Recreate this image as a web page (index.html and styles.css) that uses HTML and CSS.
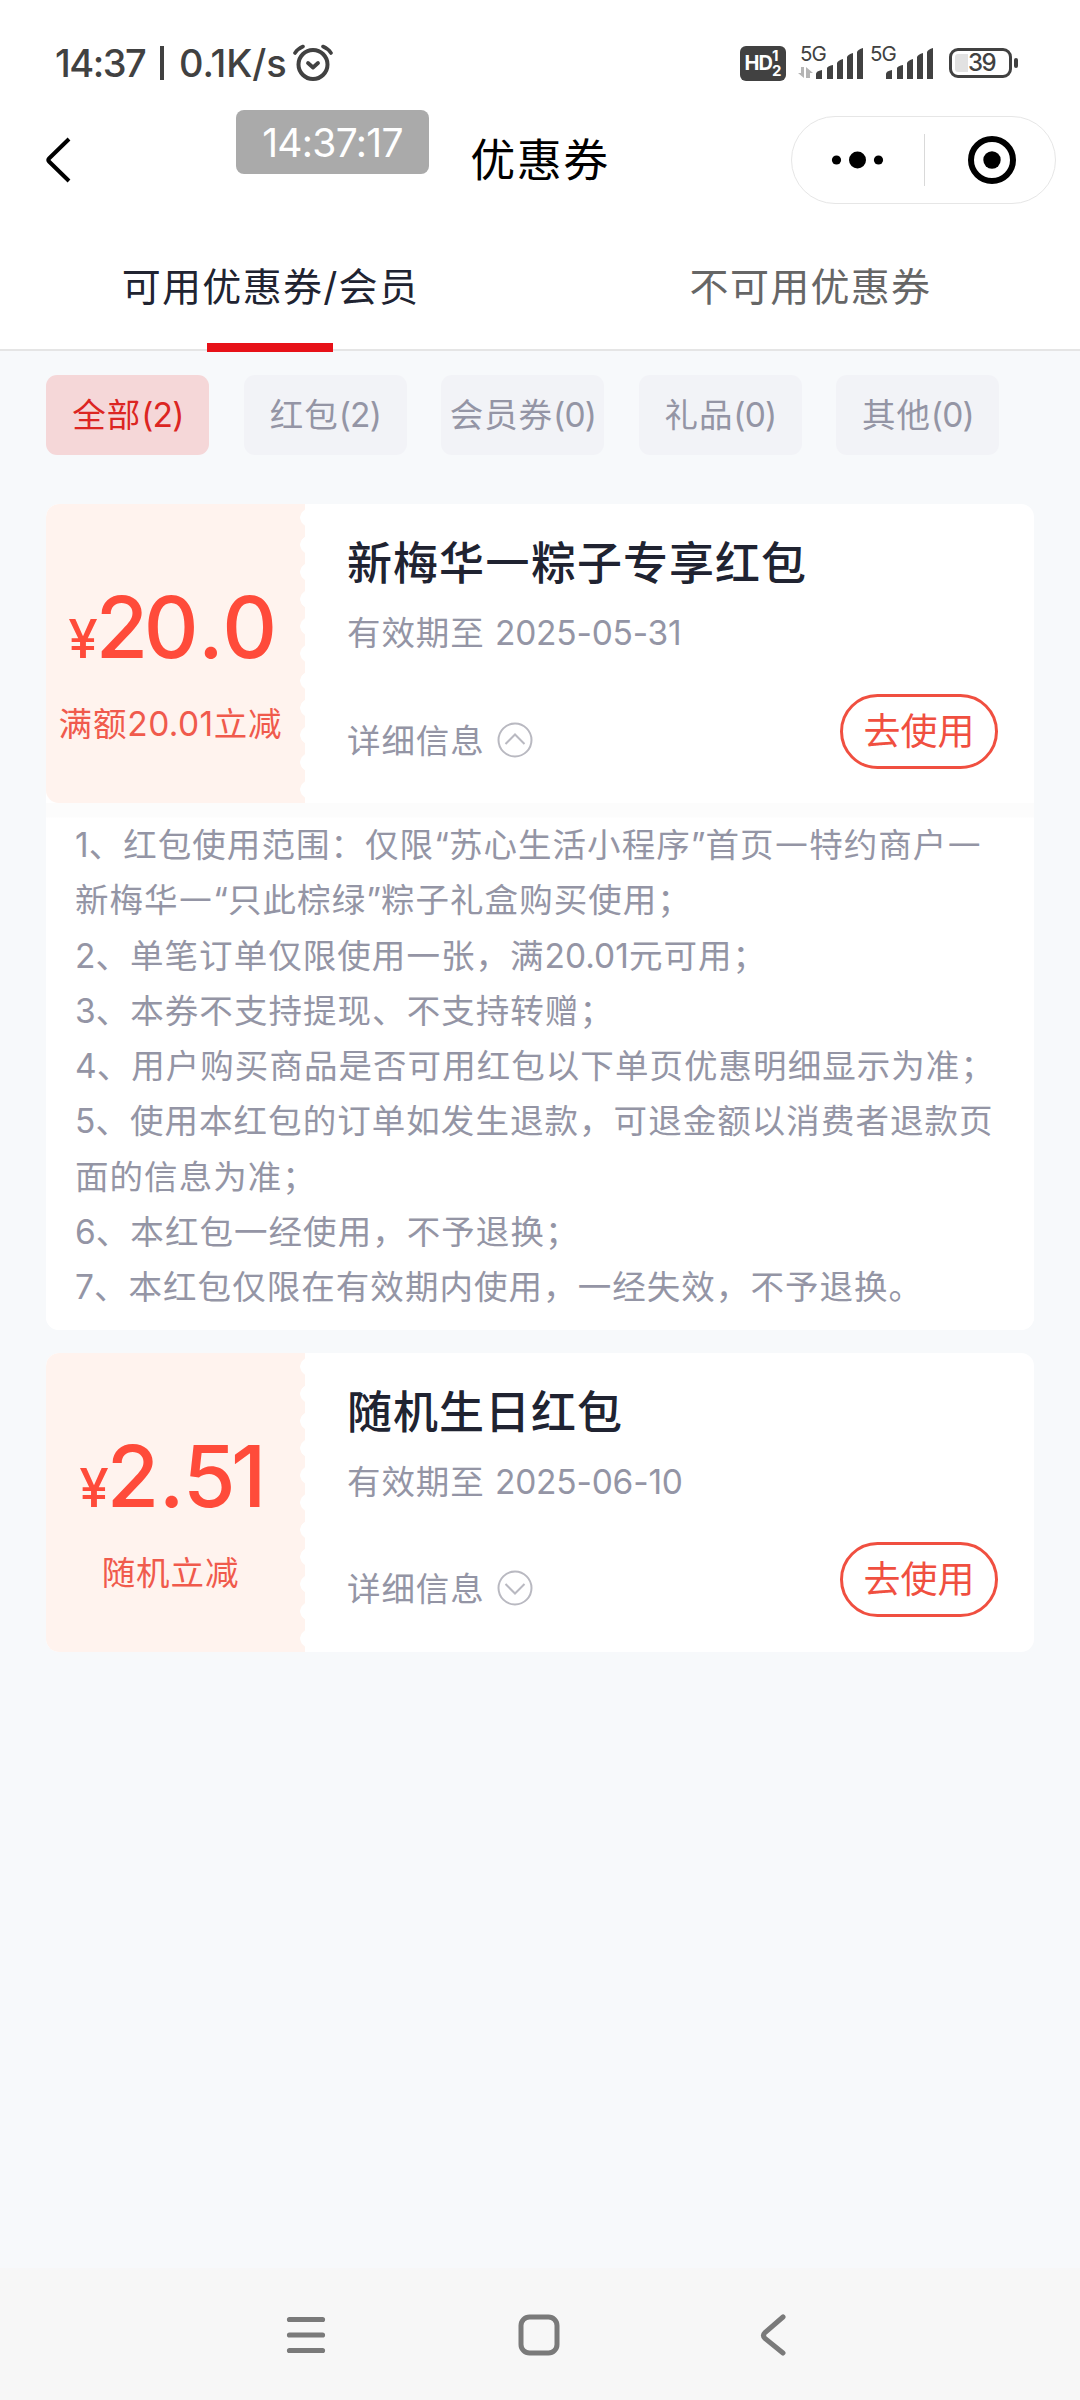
FILE: index.html
```html
<!DOCTYPE html>
<html lang="zh-CN">
<head>
<meta charset="utf-8">
<title>优惠券</title>
<link rel="stylesheet" href="styles.css">
</head>
<body>
<div class="status">
  <span class="clock">14:37</span><span class="bar"></span><span class="rate">0.1K/s</span>
  <svg class="alarm" width="40" height="38" viewBox="0 0 40 38" fill="none" stroke="#414141" stroke-linecap="round" stroke-linejoin="round"><circle cx="20" cy="20.500" r="14.500" stroke-width="4"/><path d="M15 19l5 4.500 5-4.500" stroke-width="3.800"/><path d="M2 9Q5 4.500 10 2.500M38 9Q35 4.500 30 2.500" stroke-width="3.600"/></svg>
  <span class="hd"><b>HD</b><span class="sims"><i>1</i><i>2</i></span></span>
  <span class="cell first"><span class="net">5G</span><svg width="68" height="36" viewBox="0 0 68 36" fill="#414141"><path d="M7 22v11L1 28h3v-6zM9 33V22l7 6h-3v5z" fill="#b5b5b5"/><path d="M19 34v-5q0-3 6-4v9zM30 34V23q1-2 6-3v14zM40 34V18q1-2.500 6-4v20zM50 34V12q1-2.500 6-4v26zM60 34V7q1-2.500 6-4v31z"/></svg></span>
  <span class="cell"><span class="net">5G</span><svg width="68" height="36" viewBox="0 0 68 36" fill="#414141"><path d="M19 34v-5q0-3 6-4v9zM30 34V23q1-2 6-3v14zM40 34V18q1-2.500 6-4v20zM50 34V12q1-2.500 6-4v26zM60 34V7q1-2.500 6-4v31z"/></svg></span>
  <span class="battery"><span class="level"></span><span class="pct">39</span></span><span class="nub"></span>
</div>
<header class="nav">
  <svg class="back" width="28" height="48" viewBox="0 0 28 48" fill="none" stroke="#000" stroke-width="4"><path d="M25 3L5 22.500Q3.500 24 5 25.500L25 45"/></svg>
  <h1>优惠券</h1>
  <div class="capsule">
    <svg width="132" height="60" viewBox="0 0 132 60"><circle cx="44.500" cy="30" r="4.600"/><circle cx="65.500" cy="30" r="8.500"/><circle cx="86.500" cy="30" r="4.600"/></svg>
    <span class="split"></span>
    <svg width="130" height="60" viewBox="0 0 130 60"><circle cx="67" cy="30" r="21" fill="none" stroke="#000" stroke-width="6"/><circle cx="67" cy="30" r="8.700"/></svg>
  </div>
  <div class="toast">14:37:17</div>
</header>
<nav class="tabs">
  <a class="tab on">可用优惠券/会员</a>
  <a class="tab">不可用优惠券</a>
</nav>
<div class="chips">
  <a class="chip on">全部<span>(2)</span></a>
  <a class="chip">红包<span>(2)</span></a>
  <a class="chip">会员券<span>(0)</span></a>
  <a class="chip">礼品<span>(0)</span></a>
  <a class="chip">其他<span>(0)</span></a>
</div>
<main class="list">
  <section class="coupon">
    <div class="head">
      <div class="value">
        <div class="price"><small>¥</small>20<span class="dot">.</span>0</div>
        <div class="cond">满额<span>20.01</span>立减</div>
      </div>
      <div class="info">
        <h2>新梅华<span class="dash">—</span>粽子专享红包</h2>
        <p class="date">有效期至 <span>2025-05-31</span></p>
        <div class="foot">
          <span class="more">详细信息</span>
          <svg width="36" height="36" viewBox="0 0 36 36" fill="none" stroke="#b9b9c1" stroke-width="2"><circle cx="18" cy="18" r="16.500"/><path d="M8.500 22l9.500-9.500 9.500 9.500"/></svg>
          <a class="use">去使用</a>
        </div>
      </div>
    </div>
    <div class="rules">
      <p><b>1</b>、红包使用范围：仅限<q>“</q>苏心生活小程序<q>”</q>首页<span class="dash">—</span>特约商户<span class="dash">—</span></p>
      <p>新梅华<span class="dash">—</span><q>“</q>只此棕绿<q>”</q>粽子礼盒购买使用；</p>
      <p><b>2</b>、单笔订单仅限使用一张，满<span class="num">20.01</span>元可用；</p>
      <p><b>3</b>、本券不支持提现、不支持转赠；</p>
      <p><b>4</b>、用户购买商品是否可用红包以下单页优惠明细显示为准；</p>
      <p><b>5</b>、使用本红包的订单如发生退款，可退金额以消费者退款页</p>
      <p>面的信息为准；</p>
      <p><b>6</b>、本红包一经使用，不予退换；</p>
      <p><b>7</b>、本红包仅限在有效期内使用，一经失效，不予退换。</p>
    </div>
  </section>
  <section class="coupon">
    <div class="head">
      <div class="value">
        <div class="price"><small>¥</small>2<span class="dot">.</span>51</div>
        <div class="cond">随机立减</div>
      </div>
      <div class="info">
        <h2>随机生日红包</h2>
        <p class="date">有效期至 <span>2025-06-10</span></p>
        <div class="foot">
          <span class="more">详细信息</span>
          <svg width="36" height="36" viewBox="0 0 36 36" fill="none" stroke="#b9b9c1" stroke-width="2"><circle cx="18" cy="18" r="16.500"/><path d="M8.500 14l9.500 9.500 9.500-9.500"/></svg>
          <a class="use">去使用</a>
        </div>
      </div>
    </div>
  </section>
</main>
<footer class="sysbar">
  <svg width="44" height="44" viewBox="0 0 44 44" fill="none" stroke="#7a7a7a" stroke-width="5.200" stroke-linecap="round"><path d="M5.500 6.500h33M5.500 22h33M5.500 37.500h33"/></svg>
  <svg width="44" height="44" viewBox="0 0 44 44" fill="none" stroke="#7a7a7a" stroke-width="5"><rect x="4" y="4" width="36" height="36" rx="8.500"/></svg>
  <svg width="44" height="44" viewBox="0 0 44 44" fill="none" stroke="#7a7a7a" stroke-width="5" stroke-linecap="round"><path d="M33 4L15 19.500Q12 22.500 15 25.500L33 40"/></svg>
</footer>
</body>
</html>
```
FILE: styles.css
```css
* { box-sizing: border-box; margin: 0; padding: 0; }
body {
  width: 1080px; height: 2400px; overflow: hidden;
  display: flex; flex-direction: column;
  background: #f7f9fb;
  font-family: Inter, "Noto Sans CJK SC", sans-serif;
  white-space: nowrap;
}
.status { height: 104px; padding: 22px 62px 0 55px; display: flex; align-items: center; background: #fff; color: #414141; font-size: 38px; font-weight: 500; }
.clock { width: 105px; letter-spacing: -1.500px; }
.bar { width: 4px; height: 34px; background: #414141; margin-right: 15px; }
.rate { width: 114px; letter-spacing: -0.100px; }
.hd { margin-left: auto; width: 46px; height: 35px; border-radius: 6px; background: #414141; color: #fff; display: flex; align-items: center; justify-content: center; font-size: 20px; }
.hd b { letter-spacing: -1px; }
.sims { display: flex; flex-direction: column; font-size: 15px; line-height: 15px; font-weight: 700; }
.sims i { font-style: normal; }
.cell { position: relative; margin-left: 2px; width: 68px; height: 36px; }
.cell.first { margin-left: 11px; }
.cell svg { display: block; }
.net { position: absolute; left: 3px; top: -3px; font-size: 20.500px; line-height: 24px; font-weight: 400; letter-spacing: -1px; }
.battery { margin-left: 14px; width: 63px; height: 30px; border: 3px solid #414141; border-radius: 9px; padding: 3px; display: flex; align-items: center; }
.level { width: 13px; height: 18px; background: #e2e2e2; border-radius: 3px 0 0 3px; }
.pct { font-size: 24px; line-height: 24px; letter-spacing: -1.500px; }
.nub { width: 4px; height: 10px; border-radius: 2px; background: #414141; margin-left: 2px; }

.nav { position: relative; height: 112px; padding: 0 24px 0 44px; display: grid; grid-template-columns: 265px 1fr 265px; align-items: center; background: #fff; }
.nav h1 { font-size: 45px; font-weight: 400; letter-spacing: 1.500px; text-align: center; color: #000; padding: 0 20px 5px 0; }
.capsule { width: 265px; height: 88px; border: 1px solid #e6e6e6; border-radius: 44px; display: flex; align-items: center; }
.split { width: 1px; height: 52px; background: #d9d9d9; }
.toast { position: absolute; left: 236px; top: 6px; width: 193px; height: 64px; border-radius: 8px; background: #aaa; color: #fff; font-size: 39px; line-height: 66px; text-align: center; letter-spacing: -0.700px; }

.tabs { height: 135px; background: #fff; border-bottom: 2px solid #e5e5e5; display: flex; }
.tab { position: relative; flex: 1; text-align: center; font-size: 39px; letter-spacing: 1.300px; line-height: 142px; color: #666; padding-left: 1px; }
.tab.on { color: #202331; }
.tab.on::after { content: ""; position: absolute; left: 207px; bottom: -3px; width: 126px; height: 9px; background: #e71118; }

.chips { display: flex; gap: 34.500px; padding: 24px 46px 0; }
.chip { width: 163px; height: 80px; border-radius: 11px; background: #f2f3f7; color: #9495a5; font-size: 33.500px; letter-spacing: 0.900px; line-height: 80px; text-align: center; padding-left: 1px; }
.chip span { letter-spacing: -0.800px; }
.chip.on { background: #f5d7d8; color: #dc2522; }

.list { padding: 49px 46px 0; display: flex; flex-direction: column; gap: 23px; }
.coupon { background: #fff; border-radius: 13px; overflow: hidden; }
.head { height: 299px; display: flex; }
.value {
  width: 259px; padding: 73px 10px 0 0; border-radius: 13px 0 0 13px; text-align: center; color: #ff4b3a;
  background: radial-gradient(circle 9px at 15px 50%, #fff 8.500px, #fff3ee 9px) right top / 11px 27.200px repeat-y,
              linear-gradient(#fff3ee, #fff3ee) left top / 249px 100% no-repeat;
}
.price { display: flex; justify-content: center; align-items: baseline; font-size: 85px; line-height: 102px; font-weight: 500; letter-spacing: -4.500px; }
.price small { font-size: 53px; letter-spacing: -2px; }
.dot { padding: 0 3px 0 4px; }
.cond { margin-top: 9px; font-size: 33.500px; line-height: 50px; letter-spacing: 0.900px; color: #f05a4c; }
.cond span { letter-spacing: 0.400px; }
.info { flex: 1; padding: 30px 36px 0 42px; }
h2 { font-size: 45px; line-height: 60px; font-weight: 500; letter-spacing: 1px; color: #202331; }
.dash { font-family: "Noto Sans CJK SC", sans-serif; line-height: 0; -webkit-text-stroke: 1px currentColor; }
h2 .dash { -webkit-text-stroke-width: 2px; }
.date { margin-top: 14px; font-size: 33.500px; line-height: 50px; letter-spacing: 0.900px; color: #9495a5; }
.date span { letter-spacing: -0.200px; }
.foot { margin-top: 35px; height: 76px; display: flex; align-items: center; color: #9495a5; }
.more { font-size: 33.500px; letter-spacing: 0.900px; margin: 14px 12px 0 0; }
.foot svg { margin-top: 17px; }
.use { margin-left: auto; width: 158px; height: 75px; border: 3px solid #f04f40; border-radius: 38px; color: #f04f40; font-size: 37px; line-height: 69px; text-align: center; }
.rules { padding: 15px 28px 14px 29px; background: linear-gradient(#fcfcfc 14px, #fff 15px); color: #9495a5; font-size: 33.500px; letter-spacing: 1.050px; }
.rules p { line-height: 55.300px; height: 55.300px; }
.rules b { font-weight: 400; letter-spacing: 0; }
.rules q { quotes: none; letter-spacing: 0; }
.num { letter-spacing: 0; }

.sysbar { margin-top: auto; height: 132px; background: #f7f7f7; padding: 2px 0 0 284px; display: flex; align-items: center; gap: 189px; }
```
